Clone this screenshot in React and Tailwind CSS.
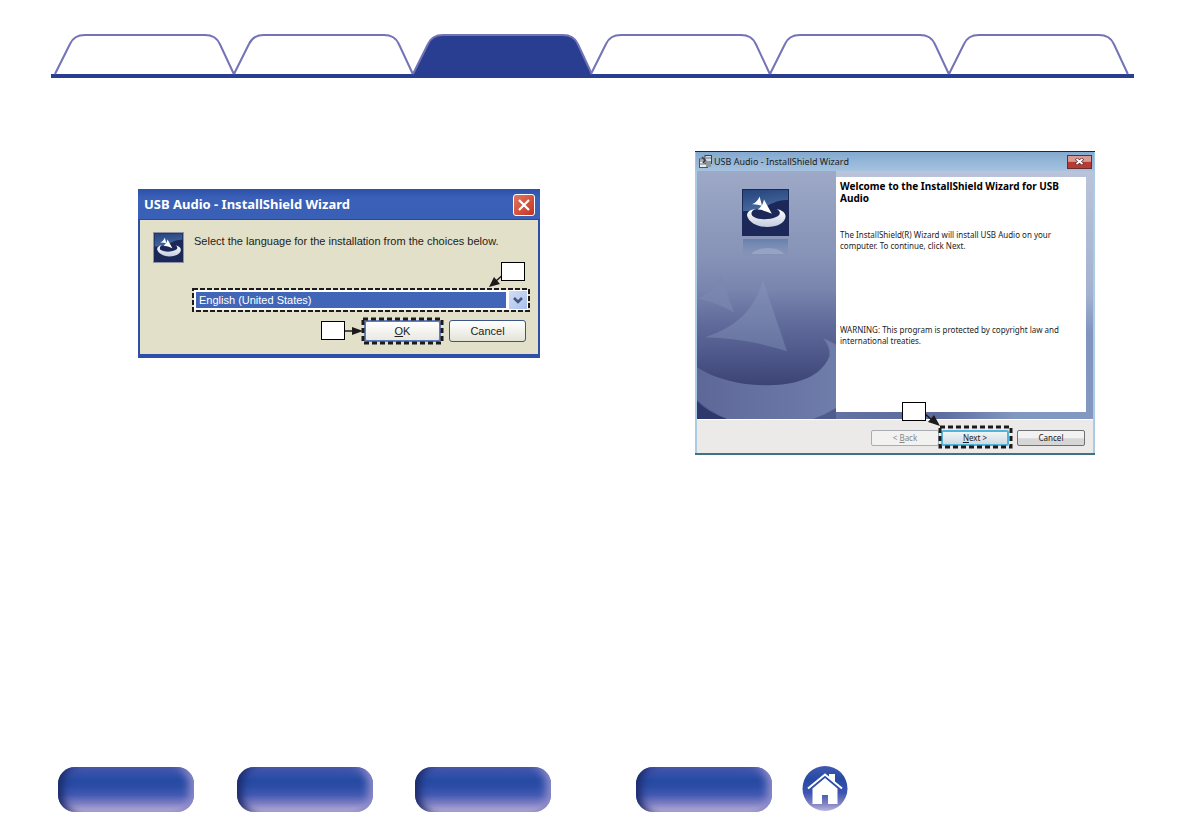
import { useState } from 'react';

const tabs = ['Contents', 'Connections', 'Playback', 'Settings', 'Tips', 'Appendix'];

const languages = ['English (United States)'];

function Tab({ label, active, onClick }) {
  return (
    <button
      type="button"
      role="tab"
      aria-label={label}
      aria-selected={active}
      onClick={onClick}
      className="h-10 flex-1"
    >
      <svg viewBox="0 0 179 40" preserveAspectRatio="none" className="block h-full w-full overflow-visible">
        <path
          d="M0 40 L15 10 C18 3 23 1 30 1 H150 C157 1 162 3 165 10 L179 40"
          fill={active ? '#293e90' : '#ffffff'}
          stroke="#7373b7"
          strokeWidth="2"
          vectorEffect="non-scaling-stroke"
        />
      </svg>
    </button>
  );
}

function InstallLogo({ className }) {
  return (
    <svg viewBox="0 0 47 47" className={className} aria-hidden="true">
      <defs>
        <linearGradient id="logoSky" x1="0" y1="0" x2="0.3" y2="1">
          <stop offset="0" stopColor="#27437c" />
          <stop offset="1" stopColor="#466a9f" />
        </linearGradient>
        <linearGradient id="logoRing" x1="0" y1="0" x2="0" y2="1">
          <stop offset="0" stopColor="#ffffff" />
          <stop offset="1" stopColor="#c3cbdd" />
        </linearGradient>
      </defs>
      <rect width="47" height="47" fill="#1c2858" />
      <path d="M1 1 H46 V11 C30 10 24 22 1 22 Z" fill="url(#logoSky)" />
      <path
        d="M13 20 C6 21 4 25 5.5 28 C8 34 16 38 25 38 C35 38 43 34 43.6 27.5 C43.6 24 40 21 34.5 20 C39 22 39 26 34 28 C28 31 17 31 12 28 C8 26 9 22 13 20 Z"
        fill="url(#logoRing)"
      />
      <path d="M17.6 7.5 Q15.5 13 10 15.300 Q15 15 20 16.8 Z" fill="#fff" />
      <path d="M22 10.5 Q21 17 15.5 20.6 Q23 21 29.8 24.8 Z" fill="#fff" />
    </svg>
  );
}

// Dashed marker drawn around a control
function Highlight({ className, width = 2 }) {
  return (
    <svg className={`pointer-events-none absolute overflow-visible ${className}`} aria-hidden="true">
      <rect
        width="100%"
        height="100%"
        fill="none"
        stroke="#1c1a1b"
        strokeWidth={width}
        strokeDasharray={width > 2 ? '5 3' : '5 2'}
      />
    </svg>
  );
}

function Callout({ className }) {
  return <span className={`absolute h-[19px] w-6 border border-black bg-white ${className}`} />;
}

function LanguageDialog() {
  const [language, setLanguage] = useState(languages[0]);

  return (
    <section className="w-full max-w-[402px] border-x-2 border-b-4 border-[#2d4fa8] bg-[#e2e0c9] font-['Liberation_Sans',sans-serif] text-[11px] text-[#1d1d1b]">
      <header className="-mx-[2px] flex h-[31px] items-center justify-between border-b border-[#2b479b] bg-linear-to-b from-[#2d50a8] via-[#3a60b8] via-30% to-[#3a5fb6] pt-[2px] pr-[5px] pl-[6px]">
        <h2 className="font-['Noto_Sans',sans-serif] text-[13px] font-bold text-white">
          USB Audio - InstallShield Wizard
        </h2>
        <button
          type="button"
          aria-label="Close"
          className="flex size-[22px] items-center justify-center rounded-[3px] border border-white bg-linear-to-br from-[#e0755f] to-[#c4301f]"
        >
          <svg viewBox="0 0 14 14" className="size-[14px]" stroke="#fff" strokeWidth="2.2">
            <path d="M2 2 L12 12 M12 2 L2 12" />
          </svg>
        </button>
      </header>

      <div className="pt-3 pr-[8px] pb-3 pl-[13px]">
        <div className="flex h-14 gap-[10px]">
          <InstallLogo className="size-[31px] shrink-0 border border-[#8f93a3]" />
          <label htmlFor="language" className="leading-[18px]">
            Select the language for the installation from the choices below.
          </label>
        </div>

        <div className="relative ml-[39px] h-6 p-[2px]">
          <select
            id="language"
            value={language}
            onChange={(e) => setLanguage(e.target.value)}
            className="block h-5 w-full appearance-none border-2 border-white bg-[#4166b8] pl-[3px] text-[11px] text-white"
          >
            {languages.map(name => (
              <option key={name}>{name}</option>
            ))}
          </select>
          <span className="pointer-events-none absolute inset-y-[3px] right-[3px] flex w-[21px] items-center justify-center border-l-[3px] border-white bg-linear-to-br from-[#d3def6] to-[#a9bfea]">
            <svg viewBox="0 0 10 7" className="h-[7px] w-[10px]" fill="none" stroke="#3f567f" strokeWidth="2.5">
              <path d="M1 1 L5 5 L9 1" />
            </svg>
          </span>
          <Highlight className="top-[1px] left-[1px] h-[22px] w-[calc(100%-2px)]" />
          <svg viewBox="0 0 18 18" className="absolute -top-4 right-[24px] size-[18px]" aria-hidden="true">
            <path d="M17 1 L8 9" stroke="#1c1a1b" strokeWidth="1.5" />
            <path d="M1 15 L6 5 L12 12 Z" fill="#1c1a1b" />
          </svg>
          <Callout className="-top-[26px] right-[5px]" />
        </div>

        <div className="mt-2 flex justify-end gap-2 pr-1">
          <div className="relative">
            <button
              type="button"
              className="h-[22px] w-[77px] rounded-[3px] border-2 border-[#5f7fc4] bg-linear-to-b from-white to-[#e9e8e0]"
            >
              <u>O</u>K
            </button>
            <Highlight className="-top-[1px] -left-[1px] h-6 w-[79px]" width={3} />
            <svg viewBox="0 0 20 10" className="absolute top-[6px] -left-5 h-[10px] w-5" aria-hidden="true">
              <path d="M0 5 H10" stroke="#1c1a1b" strokeWidth="1.5" />
              <path d="M8 1 L19 5 L8 9 Z" fill="#1c1a1b" />
            </svg>
            <Callout className="top-[1px] -left-[43px]" />
          </div>
          <button
            type="button"
            className="h-[22px] w-[77px] rounded-[3px] border border-[#3c5488] bg-linear-to-b from-white to-[#e4e3da]"
          >
            Cancel
          </button>
        </div>
      </div>
    </section>
  );
}

function BannerArt() {
  return (
    <svg viewBox="0 0 396 249" preserveAspectRatio="none" className="absolute inset-0 h-full w-full" aria-hidden="true">
      <defs>
        <linearGradient id="bannerBase" x1="0" y1="0" x2="0" y2="1">
          <stop offset="0" stopColor="#9da9c6" />
          <stop offset="0.35" stopColor="#8692b7" />
          <stop offset="0.65" stopColor="#6873a1" />
          <stop offset="1" stopColor="#4f5a8d" />
        </linearGradient>
        <linearGradient id="bannerSide" x1="0" y1="0" x2="0" y2="1">
          <stop offset="0" stopColor="#b9c4da" />
          <stop offset="0.5" stopColor="#a3b1d0" />
          <stop offset="0.65" stopColor="#8094be" />
          <stop offset="1" stopColor="#8398c1" />
        </linearGradient>
        <linearGradient id="bannerFloor" x1="0" y1="0" x2="1" y2="0">
          <stop offset="0" stopColor="#6472a2" />
          <stop offset="0.4" stopColor="#5d6b9e" />
          <stop offset="0.7" stopColor="#8297bf" />
          <stop offset="1" stopColor="#8398c1" />
        </linearGradient>
        <linearGradient id="bannerHollow" x1="0" y1="0" x2="0" y2="1">
          <stop offset="0" stopColor="#525d90" stopOpacity="0" />
          <stop offset="0.45" stopColor="#4e588c" stopOpacity="0.5" />
          <stop offset="1" stopColor="#3c4375" />
        </linearGradient>
        <linearGradient id="bannerTriangle" x1="0" y1="0" x2="0" y2="1">
          <stop offset="0" stopColor="#8290b8" />
          <stop offset="1" stopColor="#66739f" />
        </linearGradient>
        <linearGradient id="bannerRing" x1="0" y1="0" x2="1" y2="0">
          <stop offset="0" stopColor="#5d6898" />
          <stop offset="1" stopColor="#6f7dab" />
        </linearGradient>
      </defs>
      <rect width="396" height="249" fill="url(#bannerBase)" />
      <path d="M0 190 C40 230 120 215 133 186 Q134 176 126 168 Q135 171 139 176 V238 Q128 245 116 249 H30 Q10 240 0 229 Z" fill="url(#bannerRing)" />
      <path d="M0 231 Q12 243 30 249 H0 Z" fill="#2f386d" />
      <path d="M0 120 H139 V174 L126 168 Q133 176 132 186 C125 208 95 216 68 215 C40 215 15 207 0 197 Z" fill="url(#bannerHollow)" />
      <path d="M66 110 Q54 153 8 167 Q50 168 90 181 Z" fill="url(#bannerTriangle)" />
      <path d="M24 105 Q17 122 0 128 Q20 132 37 142 Z" fill="#7b88b1" opacity="0.7" />
      <rect x="139" width="257" height="249" fill="url(#bannerSide)" />
      <rect x="139" y="241" width="257" height="8" fill="url(#bannerFloor)" />
    </svg>
  );
}

function WelcomeDialog() {
  return (
    <section className="w-full max-w-[400px] border-t border-b-2 border-t-[#20292e] border-b-[#3f7282] bg-[#a9cbe3] px-[2px] font-['Noto_Sans',sans-serif] text-[8px] text-[#1d1d1b]">
      <header className="-mx-[2px] flex h-[19px] items-center border-x border-[#9fc7e4] bg-linear-to-b from-[#84a9cf] to-[#a5c3e0] pr-[2px] pl-[3px]">
        <svg viewBox="0 0 13 13" className="mr-[2px] size-[13px]" aria-hidden="true">
          <rect x="0.5" y="4" width="8" height="8.5" fill="#e9edf0" stroke="#4d5359" />
          <rect x="6" y="0.5" width="6.5" height="8" fill="#d4dbe2" stroke="#3e444a" />
          <path d="M1 6 H8 M1 9 H8 M7 3 H12" stroke="#6d7479" />
          <path d="M3 2 L6 5 L4 8" fill="none" stroke="#3a3f44" strokeWidth="1.5" />
          <rect x="7" y="6" width="5" height="6" fill="#8d979f" />
        </svg>
        <h2 className="text-[9px]">USB Audio - InstallShield Wizard</h2>
        <button
          type="button"
          aria-label="Close"
          className="ml-auto flex h-[14px] w-[25px] items-center justify-center border border-[#6b2a2c] bg-linear-to-b from-[#d99a93] from-45% to-[#b73a33] to-50%"
        >
          <svg viewBox="0 0 9 7" className="h-[7px] w-[9px]">
            <path d="M1 0.5 L8 6.5 M8 0.5 L1 6.5" stroke="#5a2a2e" strokeWidth="3.2" />
            <path d="M1.5 1 L7.5 6 M7.5 1 L1.5 6" stroke="#fff" strokeWidth="1.8" />
          </svg>
        </button>
      </header>

      <div className="relative flex pt-[6px] pr-[7px] pb-[7px]">
        <BannerArt />
        <div className="relative w-[139px] shrink-0 pt-3 pl-[45px]">
          <InstallLogo className="size-[47px]" />
          <svg viewBox="0 0 45 20" className="mt-[3px] ml-[1px] h-5 w-[45px]" aria-hidden="true">
            <defs>
              <linearGradient id="mirrorFade" x1="0" y1="0" x2="0" y2="1">
                <stop offset="0" stopColor="#5c79a8" stopOpacity="0.8" />
                <stop offset="1" stopColor="#8796ba" stopOpacity="0" />
              </linearGradient>
            </defs>
            <rect width="45" height="20" fill="url(#mirrorFade)" />
            <path d="M8 15 Q13 9 25 9 Q37 9 41 15 Z" fill="#a9b5d0" opacity="0.5" />
          </svg>
        </div>
        <div className="relative grow bg-white pt-[3px] pr-1 pb-[66px] pl-1">
          <h3 className="text-[10px] leading-3 font-bold text-black">
            Welcome to the InstallShield Wizard for USB
            <br />
            Audio
          </h3>
          <p className="mt-[25px] leading-[11px]">
            The InstallShield(R) Wizard will install USB Audio on your
            <br />
            computer. To continue, click Next.
          </p>
          <p className="mt-[73px] leading-[11px]">
            WARNING: This program is protected by copyright law and
            <br />
            international treaties.
          </p>
        </div>
      </div>

      <footer className="flex justify-end border-t border-white bg-[#ebeae8] pt-[10px] pr-2 pb-[7px]">
        <button
          type="button"
          disabled
          className="h-4 w-[68px] rounded-[2px] border border-[#a9adb2] bg-[#f2f2f1] text-[#85888b]"
        >
          &lt; <u>B</u>ack
        </button>
        <div className="relative mr-2 ml-[2px]">
          <button
            type="button"
            className="block h-4 w-[68px] rounded-[2px] border-2 border-[#52b4dc] bg-linear-to-b from-[#f0f4f6] to-[#cfdbe2]"
          >
            <u>N</u>ext &gt;
          </button>
          <Highlight className="-top-[3px] -left-[1px] h-5 w-[71px]" width={3} />
          <svg viewBox="0 0 18 16" className="absolute -top-[19px] -left-[18px] h-4 w-[18px]" aria-hidden="true">
            <path d="M1 2 L9 9" stroke="#1c1a1b" strokeWidth="1.5" />
            <path d="M17 15 L5 11 L11 4 Z" fill="#1c1a1b" />
          </svg>
          <Callout className="-top-[28px] -left-[39px]" />
        </div>
        <button
          type="button"
          className="h-4 w-[68px] rounded-[2px] border border-[#707070] bg-linear-to-b from-[#f2f2f2] from-50% to-[#d6d6d6] to-55%"
        >
          Cancel
        </button>
      </footer>
    </section>
  );
}

function PillButton({ label, className = '' }) {
  return (
    <button
      type="button"
      aria-label={label}
      className={`h-[45px] w-[136px] rounded-[17px] bg-[linear-gradient(to_bottom,#4458b0_0%,#264aa3_30%,#2a4ca5_42%,#4259b2_62%,#8080c3_82%,#c2bbe1_100%)] shadow-[inset_9px_0_8px_-4px_#1c2a68,inset_-9px_0_8px_-4px_#8f8ccb] ${className}`}
    />
  );
}

function HomeLink() {
  return (
    <a href="#home" aria-label="Home" className="ml-[30px] block">
      <svg viewBox="0 0 46 46" className="size-[46px]">
        <defs>
          <linearGradient id="homeFill" x1="0" y1="0" x2="0" y2="1">
            <stop offset="0" stopColor="#4258b0" />
            <stop offset="0.3" stopColor="#264aa3" />
            <stop offset="0.6" stopColor="#3d55b0" />
            <stop offset="0.85" stopColor="#8485c5" />
            <stop offset="1" stopColor="#bcb5de" />
          </linearGradient>
        </defs>
        <circle cx="23" cy="22.5" r="22.5" fill="url(#homeFill)" />
        <path d="M27 8 H33 V17 L27 12 Z" fill="#fff" />
        <path d="M6 22.5 L23 8.5 L40 22.5" fill="none" stroke="#fff" strokeWidth="2" />
        <path d="M10.5 22.5 L23 12 L35.5 22.5 V38 H26 V29 H20 V38 H10.5 Z" fill="#fff" />
      </svg>
    </a>
  );
}

export default function App() {
  const [activeTab, setActiveTab] = useState('Playback');

  return (
    <div className="flex min-h-screen flex-col bg-white pt-[34px] pr-[58px] pb-7 pl-[51px]">
      <nav role="tablist" className="flex border-b-4 border-[#293e90] pr-[6px] pl-1">
        {tabs.map(name => (
          <Tab
            key={name}
            label={name}
            active={name === activeTab}
            onClick={() => setActiveTab(name)}
          />
        ))}
      </nav>

      <main className="mt-[73px] grid grid-cols-2 gap-[31px]">
        <div className="pt-[38px] pl-[87px]">
          <LanguageDialog />
        </div>
        <div className="pl-[87px]">
          <WelcomeDialog />
        </div>
      </main>

      <footer className="mt-auto flex items-center pl-[7px]">
        <PillButton label="Front panel" />
        <PillButton label="Rear panel" className="ml-[43px]" />
        <PillButton label="Remote" className="ml-[42px]" />
        <PillButton label="Index" className="ml-[85px]" />
        <HomeLink />
      </footer>
    </div>
  );
}
